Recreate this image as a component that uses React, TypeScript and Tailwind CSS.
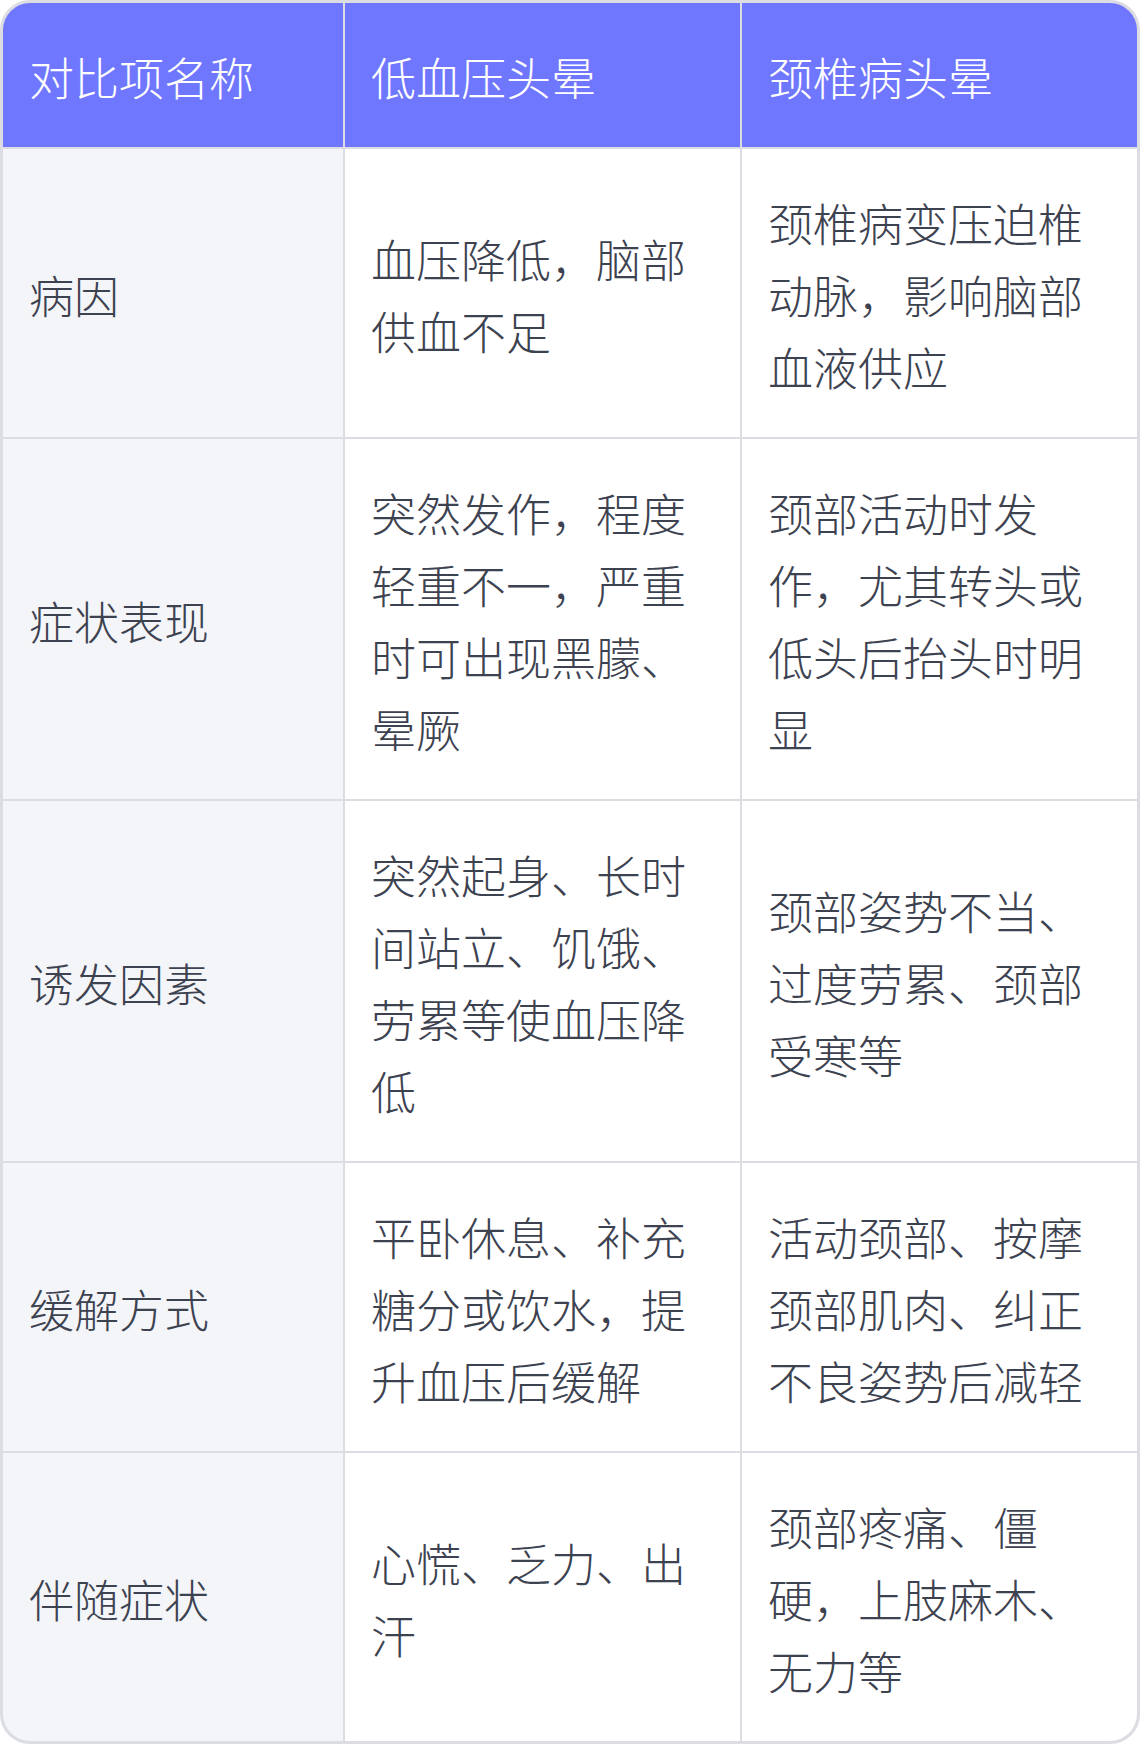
import React from "react";

const rows: [string, string, string][] = [
  ["病因", "血压降低，脑部供血不足", "颈椎病变压迫椎动脉，影响脑部血液供应"],
  ["症状表现", "突然发作，程度轻重不一，严重时可出现黑朦、晕厥", "颈部活动时发作，尤其转头或低头后抬头时明显"],
  ["诱发因素", "突然起身、长时间站立、饥饿、劳累等使血压降低", "颈部姿势不当、过度劳累、颈部受寒等"],
  ["缓解方式", "平卧休息、补充糖分或饮水，提升血压后缓解", "活动颈部、按摩颈部肌肉、纠正不良姿势后减轻"],
  ["伴随症状", "心慌、乏力、出汗", "颈部疼痛、僵硬，上肢麻木、无力等"],
];

export default function App() {
  return (
    <div
      className="w-[1140px] bg-white"
      style={{ fontFamily: '"Noto Sans CJK SC", "Noto Sans", sans-serif' }}
    >
      <div className="rounded-[30px] overflow-hidden border-[3px] border-[#dcdde2] bg-[#dcdde2]">
        <div className="grid grid-cols-[340px_395px_395px] gap-[2px] text-[45px] leading-[72px] font-light">
          {["对比项名称", "低血压头晕", "颈椎病头晕"].map((h) => (
            <div key={h} className="bg-[#7077ff] text-white pl-[26px] pr-[28px] pt-[38px] pb-[34px] flex items-center">
              {h}
            </div>
          ))}
          {rows.map((r) => (
            <React.Fragment key={r[0]}>
              <div className="bg-[#f4f5f9] text-[#3d4250] pl-[26px] pr-[28px] pt-[38px] pb-[34px] flex items-center">
                {r[0]}
              </div>
              <div className="bg-white text-[#3d4250] pl-[26px] pr-[28px] pt-[38px] pb-[34px] flex items-center">
                <span>{r[1]}</span>
              </div>
              <div className="bg-white text-[#3d4250] pl-[26px] pr-[28px] pt-[38px] pb-[34px] flex items-center">
                <span>{r[2]}</span>
              </div>
            </React.Fragment>
          ))}
        </div>
      </div>
    </div>
  );
}
